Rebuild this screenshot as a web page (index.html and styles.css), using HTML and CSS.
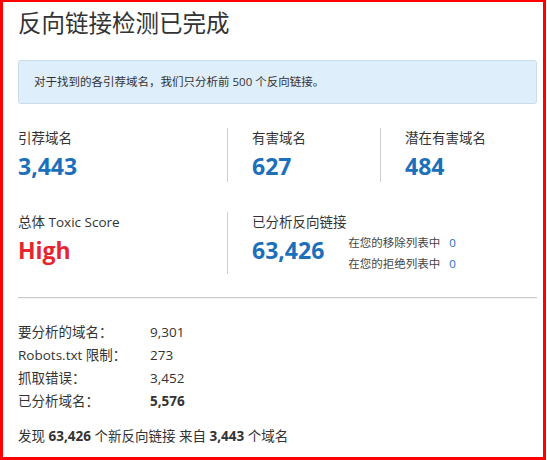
FILE: index.html
```html
<!DOCTYPE html>
<html lang="zh-CN">
<head>
<meta charset="utf-8">
<title>反向链接检测已完成</title>
<link rel="stylesheet" href="styles.css">
</head>
<body>
<div class="frame">
  <h1 class="title">反向链接检测已完成</h1>
  <div class="notice">对于找到的各引荐域名，我们只分析前 500 个反向链接。</div>

  <div class="stats">
    <div class="cell">
      <div class="label">引荐域名</div>
      <div class="num">3,443</div>
    </div>
    <div class="cell divided">
      <div class="label">有害域名</div>
      <div class="num">627</div>
    </div>
    <div class="cell divided">
      <div class="label">潜在有害域名</div>
      <div class="num">484</div>
    </div>

    <div class="cell row2">
      <div class="label">总体 Toxic Score</div>
      <div class="num red">High</div>
    </div>
    <div class="cell divided wide row2">
      <div class="label">已分析反向链接</div>
      <div class="num-row">
        <div class="num">63,426</div>
        <ul class="sublist">
          <li><span class="sub-label">在您的移除列表中</span><span class="sub-val">0</span></li>
          <li><span class="sub-label">在您的拒绝列表中</span><span class="sub-val">0</span></li>
        </ul>
      </div>
    </div>
  </div>

  <hr class="rule">

  <dl class="details">
    <div class="drow"><dt>要分析的域名：</dt><dd>9,301</dd></div>
    <div class="drow"><dt>Robots.txt 限制：</dt><dd>273</dd></div>
    <div class="drow"><dt>抓取错误：</dt><dd>3,452</dd></div>
    <div class="drow"><dt>已分析域名：</dt><dd class="strong">5,576</dd></div>
  </dl>

  <p class="footer">发现 <b>63,426</b> 个新反向链接 来自 <b>3,443</b> 个域名</p>
</div>
</body>
</html>
```

FILE: styles.css
```css
* { box-sizing: border-box; }

html, body {
  margin: 0;
  padding: 0;
  background: #ffffff;
}

body {
  font-family: "Open Sans", "Noto Sans CJK SC", sans-serif;
  color: #333333;
}

.frame {
  width: 546px;
  height: 460px;
  border-left: 3px solid #ff0000;
  border-top: 2px solid #ff0000;
  border-right: 3px solid #ff0000;
  border-bottom: 3px solid #ff0000;
  padding: 6px 6px 0 15px;
  overflow: hidden;
}

.title {
  margin: 0;
  font-size: 23.5px;
  line-height: 30px;
  font-weight: normal;
  color: #333333;
}

.notice {
  margin-top: 22px;
  height: 44px;
  line-height: 42px;
  padding: 0 15px;
  background: #dfeefb;
  border: 1px solid #cadcea;
  border-radius: 3px;
  font-size: 11.5px;
  color: #333333;
}

.stats {
  margin-top: 24px;
  display: grid;
  grid-template-columns: 209px 153px 1fr;
  row-gap: 30px;
}

.cell {
  display: flex;
  flex-direction: column;
}

.divided {
  border-left: 1px solid #cfcfcf;
  padding-left: 24px;
}

.wide {
  grid-column: 2 / 4;
}

.label {
  font-size: 13.5px;
  line-height: 20px;
  color: #333333;
}

.num {
  margin-top: 2px;
  font-size: 23px;
  line-height: 32px;
  font-weight: 700;
  color: #1b6fbb;
}

.num.red {
  color: #e6262f;
}

.num-row {
  display: flex;
  align-items: flex-start;
  gap: 24px;
}

.sublist {
  list-style: none;
  margin: 0;
  padding: 0;
  font-size: 11.5px;
  line-height: 21px;
  color: #444444;
}

.sub-val {
  margin-left: 9px;
  color: #1b6fbb;
}

.rule {
  margin: 23px 0 0 0;
  border: 0;
  height: 1px;
  background: #cccccc;
  box-shadow: 0 1px 0 #f3f3f3;
}

.details {
  margin: 23px 0 0 0;
  font-size: 13.5px;
  line-height: 23px;
}

.drow {
  display: flex;
}

.drow dt {
  width: 132px;
  margin: 0;
}

.drow dd {
  margin: 0;
}

.drow dd.strong {
  font-weight: 700;
}

.footer {
  margin: 12px 0 0 0;
  font-size: 13.5px;
  line-height: 23px;
}

.footer b {
  font-weight: 700;
}
```
